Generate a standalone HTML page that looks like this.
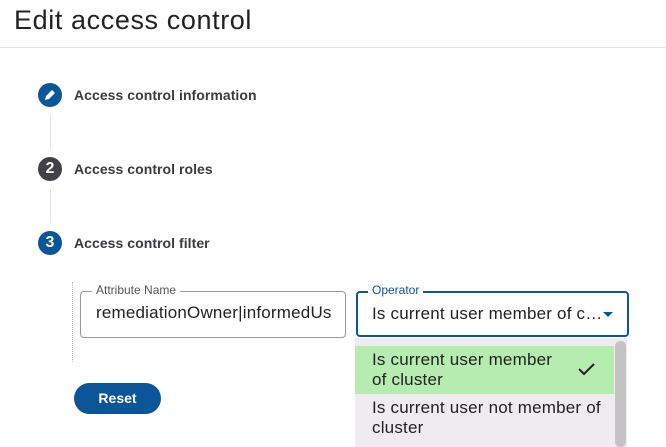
<!DOCTYPE html>
<html><head><style>
body{margin:0;width:666px;height:447px;overflow:hidden;background:#fff;font-family:"Liberation Sans",sans-serif;position:relative;color:#333}
.a{position:absolute}
h1{position:absolute;left:14px;top:5px;margin:0;font-size:27px;font-weight:normal;color:#222;letter-spacing:0.6px}
.hr{left:0;top:47px;width:666px;height:1px;background:#e5e5e5}
.c{width:24px;height:24px;border-radius:50%;color:#fff;font-weight:bold;font-size:16px;text-align:center;line-height:24px;left:38px}
.l{left:74px;font-size:14px;font-weight:bold;color:#3a3a40;letter-spacing:0.05px}
.v{left:50px;width:1px;background:#e3e3e3}
.f{border-radius:4px;box-sizing:border-box}
.lab{font-size:12px;background:#fff;padding:0 4px}
.val{font-size:17px;color:#222;white-space:nowrap;overflow:hidden;letter-spacing:0.2px}
</style></head><body>
<h1>Edit access control</h1>
<div class="a hr"></div>
<div class="a c" style="top:83px;background:#0b5599"><svg width="24" height="24" viewBox="0 0 24 24"><path d="M7 17l1-4 6-6 3 3-6 6z" fill="#fff"/></svg></div>
<div class="a l" style="top:87px">Access control information</div>
<div class="a v" style="top:115px;height:34px"></div>
<div class="a c" style="top:157px;background:#414147">2</div>
<div class="a l" style="top:161px">Access control roles</div>
<div class="a v" style="top:189px;height:34px"></div>
<div class="a c" style="top:231px;background:#0b5599">3</div>
<div class="a l" style="top:235px">Access control filter</div>
<div class="a" style="left:72px;top:282px;height:80px;border-left:1px dotted #bbb"></div>
<div class="a f" style="left:80px;top:291px;width:266px;height:47px;border:1px solid #999"></div>
<div class="a lab" style="left:92px;top:283px;color:#555">Attribute Name</div>
<div class="a val" style="left:96px;top:303px;width:245px">remediationOwner|informedUs</div>
<div class="a f" style="left:356px;top:291px;width:273px;height:46px;border:2px solid #0b5599"></div>
<div class="a lab" style="left:368px;top:283px;color:#0b5599">Operator</div>
<div class="a val" style="left:372px;top:304px">Is current user member of c…</div>
<div class="a" style="left:603px;top:312px;border-left:5px solid transparent;border-right:5px solid transparent;border-top:5px solid #0b5599"></div>
<div class="a" style="left:355px;top:338px;width:272px;height:109px;background:#eeecef"></div>
<div class="a" style="left:355px;top:346px;width:259px;height:48px;background:#b7ecb0"></div>
<div class="a" style="left:615px;top:341px;width:11px;height:106px;background:#c4c4c4;border-radius:5px"></div>
<div class="a val" style="left:372px;top:350px;line-height:20px">Is current user member<br>of cluster</div>
<svg class="a" style="left:577px;top:361px" width="20" height="16"><path d="M2 8l5 5 10-10" stroke="#222" stroke-width="2" fill="none"/></svg>
<div class="a val" style="left:372px;top:398px;line-height:20px">Is current user not member of<br>cluster</div>
<div class="a" style="left:74px;top:383px;width:87px;height:31px;border-radius:16px;background:#0b5599;color:#fff;font-weight:bold;font-size:14px;text-align:center;line-height:31px">Reset</div>
</body></html>
